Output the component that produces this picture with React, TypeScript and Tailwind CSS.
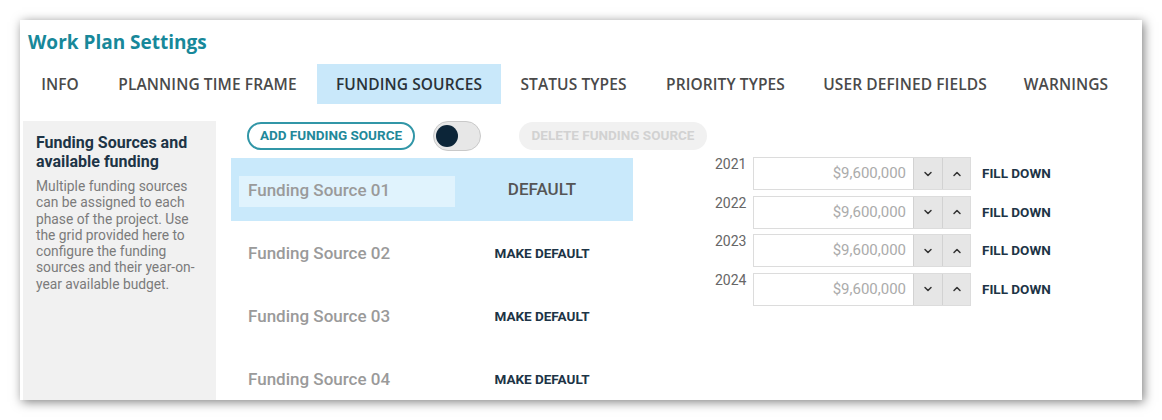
import React from "react";
import { ChevronDown, ChevronUp } from "lucide-react";

const tabs = [
  { label: "INFO", w: "w-[76px]" },
  { label: "PLANNING TIME FRAME", w: "w-[219px]" },
  { label: "FUNDING SOURCES", w: "w-[184px]", active: true },
  { label: "STATUS TYPES", w: "w-[145px]" },
  { label: "PRIORITY TYPES", w: "w-[159px]" },
  { label: "USER DEFINED FIELDS", w: "w-[200px]" },
  { label: "WARNINGS", w: "w-[122px]" },
];

const sources = ["Funding Source 01", "Funding Source 02", "Funding Source 03", "Funding Source 04"];
const years = ["2021", "2022", "2023", "2024"];

export default function App() {
  return (
    <div className="w-[1162px] h-[420px] bg-white p-[20px]" style={{ fontFamily: "Roboto, 'Noto Sans', sans-serif" }}>
      <div className="w-[1122px] h-[380px] bg-white shadow-[2px_2px_10px_rgba(0,0,0,0.5)] overflow-hidden flex flex-col">
        {/* Title */}
        <div className="h-[44px] pl-[8px] flex items-center">
          <h1 className="text-[19px] font-bold text-[#17889a] leading-none" style={{ fontFamily: "'Open Sans', sans-serif" }}>
            Work Plan Settings
          </h1>
        </div>
        {/* Tabs */}
        <div className="h-[40px] pl-[2px] flex" style={{ fontFamily: "'Open Sans', sans-serif" }}>
          {tabs.map((t) => (
            <div
              key={t.label}
              className={`${t.w} h-full pt-[2px] flex items-center justify-center whitespace-nowrap text-[15.5px] tracking-[0.1px] font-semibold ${
                t.active ? "bg-[#c9e8fa] text-[#2a3238]" : "text-[#4a4a4a]"
              }`}
            >
              {t.label}
            </div>
          ))}
        </div>
        {/* Content */}
        <div className="mt-[17px] flex flex-1 min-h-0">
          <div className="ml-[3px] w-[193px] bg-[#f1f1f1] pl-[13px] pt-[12px]">
            <div className="text-[16px] font-bold text-[#1d3446] leading-[19px]">
              Funding Sources and
              <br />
              available funding
            </div>
            <div className="mt-[7px] text-[13.8px] text-[#7b7b7b] leading-[16.3px] whitespace-nowrap">
              Multiple funding sources
              <br />
              can be assigned to each
              <br />
              phase of the project. Use
              <br />
              the grid provided here to
              <br />
              configure the funding
              <br />
              sources and their year-on-
              <br />
              year available budget.
            </div>
          </div>
          <div className="flex flex-col">
            {/* Top buttons */}
            <div className="h-[29px] pl-[31px] flex items-center">
              <button className="w-[168px] h-[28px] rounded-full border-2 border-[#3196a7] text-[#22889a] text-[13.5px] font-bold flex items-center justify-center whitespace-nowrap">
                ADD FUNDING SOURCE
              </button>
              <div className="ml-[18px] w-[48px] h-[30px] rounded-full bg-[#e7e7e7] border border-[#c9c9c9] flex items-center pl-[2px]">
                <div className="w-[22px] h-[22px] rounded-full bg-[#0c2538]" />
              </div>
              <button className="ml-[38px] w-[188px] h-[28px] rounded-full bg-[#f1f1f1] text-[#d2d2d2] text-[13.5px] font-bold flex items-center justify-center whitespace-nowrap">
                DELETE FUNDING SOURCE
              </button>
            </div>
            <div className="mt-[8px] flex">
              {/* Sources list */}
              <div className="ml-[15px] w-[402px] flex flex-col">
                {sources.map((s, i) => (
                  <div key={s} className={`h-[63px] shrink-0 pl-[8px] flex items-center ${i === 0 ? "bg-[#c9e9fb]" : ""}`}>
                    <div className={`w-[216px] h-[31px] pl-[9px] flex items-center mt-[3px] ${i === 0 ? "bg-[#e0f3fd]" : ""}`}>
                      <span className="text-[17px] font-medium text-[#9a9a9a] whitespace-nowrap">{s}</span>
                    </div>
                    <div className="flex-1 flex justify-center pr-[4px] mt-[1px]">
                      {i === 0 ? (
                        <span className="text-[17px] font-medium text-[#555]">DEFAULT</span>
                      ) : (
                        <span className="text-[13.5px] font-bold text-[#1d3446]">MAKE DEFAULT</span>
                      )}
                    </div>
                  </div>
                ))}
              </div>
              {/* Years grid */}
              <div className="ml-[82px] -mt-[1px] flex flex-col gap-[5.5px]">
                {years.map((y) => (
                  <div key={y} className="flex h-[33px]">
                    <div className="w-[38px] -mt-[2px] text-[14px] text-[#666] leading-[18px]">{y}</div>
                    <div className="flex h-[33px] border border-[#dcdcdc]">
                      <div className="w-[159px] bg-white flex items-center justify-end pr-[7px] text-[15px] text-[#ababab]">
                        $9,600,000
                      </div>
                      <div className="w-[29px] bg-[#e6e6e6] border-l border-[#d2d2d2] flex items-center justify-center text-[#333]">
                        <ChevronDown size={12} strokeWidth={3} />
                      </div>
                      <div className="w-[28px] bg-[#e6e6e6] border-l border-[#d2d2d2] flex items-center justify-center text-[#333]">
                        <ChevronUp size={12} strokeWidth={3} />
                      </div>
                    </div>
                    <div className="ml-[11px] flex items-center text-[13.5px] font-bold text-[#1d3446] whitespace-nowrap">
                      FILL DOWN
                    </div>
                  </div>
                ))}
              </div>
            </div>
          </div>
        </div>
      </div>
    </div>
  );
}
